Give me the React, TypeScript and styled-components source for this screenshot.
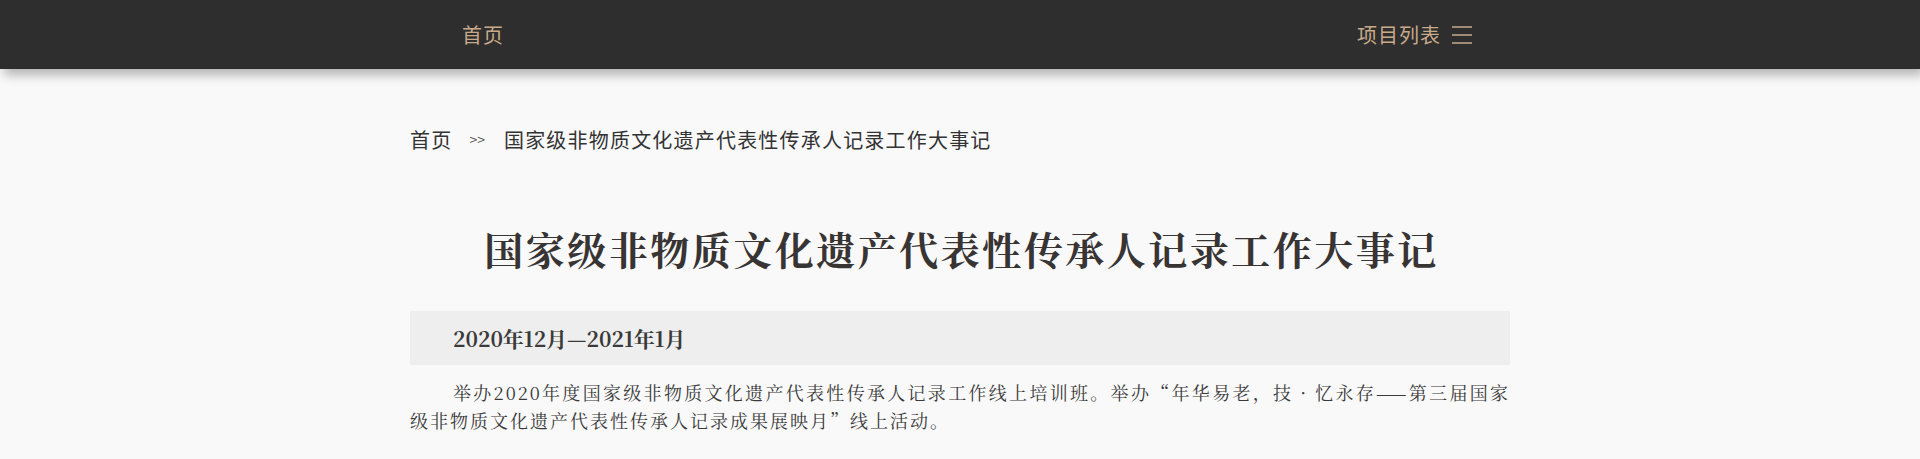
import React from "react";
import styled, { createGlobalStyle } from "styled-components";

const GlobalStyle = createGlobalStyle`
  html, body {
    margin: 0;
    padding: 0;
    background: #f9f9f9;
  }
  body {
    font-family: "Noto Sans CJK SC", "Noto Sans", sans-serif;
    color: #333;
  }
`;

const SERIF = `"Noto Serif CJK SC", "Noto Serif SC", "Source Han Serif SC", serif`;

const Header = styled.header`
  height: 69px;
  background: #2e2e2e;
  box-shadow: 4px 6px 10px rgba(0, 0, 0, 0.28);
  position: relative;
  z-index: 1;
`;

const HeaderInner = styled.nav`
  width: 1100px;
  height: 100%;
  margin: 0 auto;
  padding: 0 38px 0 52px;
  box-sizing: border-box;
  display: flex;
  align-items: center;
  justify-content: space-between;
`;

const NavLink = styled.a`
  font-family: "Noto Sans CJK SC", sans-serif;
  font-size: 20px;
  letter-spacing: 1px;
  color: #c8a98a;
  text-decoration: none;
  display: flex;
  align-items: center;
  gap: 11px;
  line-height: 1;
`;

const Main = styled.main`
  width: 1100px;
  margin: 0 auto;
  padding-top: 58px;
`;

const Crumbs = styled.div`
  display: flex;
  align-items: center;
  height: 24px;
  font-size: 20px;
  color: #333;
  white-space: nowrap;
`;

const Crumb = styled.span`
  letter-spacing: 1.2px;
  flex: none;
`;

const Sep = styled.span`
  font-size: 14px;
  color: #555;
  margin: 0 19px 0 17px;
  letter-spacing: 0;
  flex: none;
`;

const Title = styled.h1`
  margin: 72px 0 0;
  text-align: center;
  font-family: ${SERIF};
  font-weight: 700;
  font-size: 39px;
  line-height: 50px;
  letter-spacing: 2.5px;
  padding-left: 3px;
  color: #383434;
  white-space: nowrap;
`;

const DateBar = styled.div`
  margin-top: 38px;
  height: 54px;
  line-height: 54px;
  background: #eeeeee;
  padding-left: 43px;
  font-family: ${SERIF};
  font-weight: 700;
  font-size: 21px;
  color: #3a3a3a;
`;

const Para = styled.p`
  margin: 13px 0 0;
  font-family: ${SERIF};
  font-size: 18px;
  line-height: 28px;
  letter-spacing: 2px;
  text-indent: 43px;
  text-align: justify;
  color: #3a3a3a;
`;

const MenuIcon = () => (
  <svg width="20" height="18" viewBox="0 0 20 18" fill="none">
    <path d="M0 1h20M0 9h20M0 17h20" stroke="#c8a98a" strokeWidth="1.6" />
  </svg>
);

export default function App() {
  return (
    <>
      <GlobalStyle />
      <Header>
        <HeaderInner>
          <NavLink href="#">首页</NavLink>
          <NavLink href="#">
            项目列表
            <MenuIcon />
          </NavLink>
        </HeaderInner>
      </Header>
      <Main>
        <Crumbs>
          <Crumb>首页</Crumb>
          <Sep>&gt;&gt;</Sep>
          <Crumb>国家级非物质文化遗产代表性传承人记录工作大事记</Crumb>
        </Crumbs>
        <Title>国家级非物质文化遗产代表性传承人记录工作大事记</Title>
        <DateBar>2020年12月—2021年1月</DateBar>
        <Para>
          举办2020年度国家级非物质文化遗产代表性传承人记录工作线上培训班。举办“年华易老，技 · 忆永存——第三届国家级非物质文化遗产代表性传承人记录成果展映月”线上活动。
        </Para>
      </Main>
    </>
  );
}
